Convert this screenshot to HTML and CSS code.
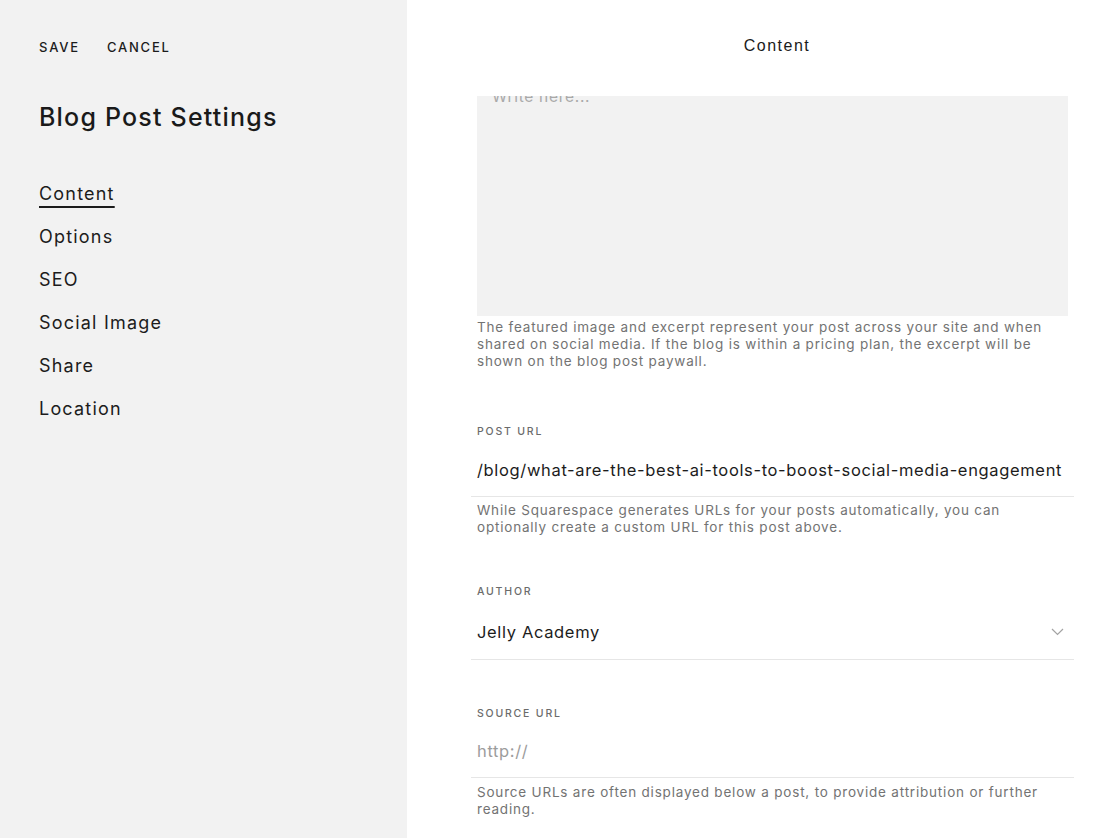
FILE: index.html
```html
<!DOCTYPE html>
<html lang="en">
<head>
<meta charset="utf-8">
<title>Blog Post Settings</title>
<link rel="stylesheet" href="styles.css">
</head>
<body>
<div class="app">
  <aside class="sidebar">
    <div class="actions">
      <span class="action">SAVE</span>
      <span class="action">CANCEL</span>
    </div>
    <h1 class="title">Blog Post Settings</h1>
    <nav class="nav">
      <a class="nav-item active">Content</a>
      <a class="nav-item">Options</a>
      <a class="nav-item">SEO</a>
      <a class="nav-item">Social Image</a>
      <a class="nav-item">Share</a>
      <a class="nav-item">Location</a>
    </nav>
  </aside>
  <main class="main">
    <header class="topbar">Content</header>
    <div class="content">
      <div class="excerpt"><div class="excerpt-placeholder">Write here...</div></div>
      <p class="help help-first">The featured image and excerpt represent your post across your site and when shared on social media. If the blog is within a pricing plan, the excerpt will be shown on the blog post paywall.</p>

      <section class="field field-post">
        <div class="label">POST URL</div>
        <div class="input value">/blog/what-are-the-best-ai-tools-to-boost-social-media-engagement</div>
        <p class="help">While Squarespace generates URLs for your posts automatically, you can optionally create a custom URL for this post above.</p>
      </section>

      <section class="field field-author">
        <div class="label">AUTHOR</div>
        <div class="input select">
          <span class="value">Jelly Academy</span>
          <svg class="chevron" width="13" height="8" viewBox="0 0 13 8"><path d="M1 1 L6.5 6.5 L12 1" fill="none" stroke="#a3a3a3" stroke-width="1.2"/></svg>
        </div>
      </section>

      <section class="field field-source">
        <div class="label">SOURCE URL</div>
        <div class="input input-source placeholder">http://</div>
        <p class="help help-source">Source URLs are often displayed below a post, to provide attribution or further reading.</p>
      </section>
    </div>
  </main>
</div>
</body>
</html>
```
FILE: styles.css
```css
* { box-sizing: border-box; }
html, body { margin: 0; padding: 0; }
body {
  font-family: Inter, "Liberation Sans", Arial, sans-serif;
  color: #1c1c1c;
  background: #ffffff;
  width: 1108px;
  height: 838px;
  overflow: hidden;
}
.app {
  display: flex;
  height: 838px;
}
.sidebar {
  width: 407px;
  flex: 0 0 407px;
  background: #f2f2f2;
  padding: 39px 0 0 39px;
}
.actions {
  display: flex;
  gap: 27px;
  line-height: 16px;
}
.action {
  font-size: 13px;
  font-weight: 500;
  letter-spacing: 1.8px;
  color: #1c1c1c;
}
.title {
  margin: 47px 0 0;
  font-size: 25px;
  line-height: 30px;
  font-weight: 500;
  letter-spacing: 1.2px;
  color: #1a1a1a;
}
.nav {
  margin-top: 50px;
  display: flex;
  flex-direction: column;
  align-items: flex-start;
  gap: 19px;
}
.nav-item {
  font-size: 18px;
  line-height: 24px;
  letter-spacing: 1.2px;
  color: #1c1c1c;
}
.nav-item.active {
  text-decoration: underline;
  text-decoration-thickness: 2px;
  text-underline-offset: 6px;
}
.main {
  flex: 1;
  display: flex;
  flex-direction: column;
}
.topbar {
  height: 96px;
  padding: 37px 0 0 39px;
  text-align: center;
  font-family: "Liberation Sans", Arial, sans-serif;
  font-size: 16px;
  line-height: 18px;
  letter-spacing: 1.5px;
  color: #1a1a1a;
}
.content {
  padding: 0 34px 0 64px;
}
.excerpt {
  margin: 0 6px;
  height: 220px;
  background: #f2f2f2;
  overflow: hidden;
}
.excerpt-placeholder {
  margin-top: -9px;
  padding-left: 15px;
  font-size: 15.5px;
  line-height: 20px;
  letter-spacing: 0.7px;
  color: #a9a9a9;
}
.help {
  margin: 5px 0 0;
  padding: 0 6px;
  font-size: 13.5px;
  line-height: 17px;
  letter-spacing: 0.8px;
  color: #737373;
}
.help-first { margin-top: 3px; }
.field-post { margin-top: 55px; }
.field-author { margin-top: 49px; }
.field-source { margin-top: 47px; }
.label {
  padding: 0 6px;
  font-size: 10.5px;
  line-height: 14px;
  font-weight: 500;
  letter-spacing: 1.8px;
  color: #6b6b6b;
}
.input {
  padding: 21px 6px 16px;
  font-size: 16.5px;
  line-height: 20px;
  letter-spacing: 0.65px;
  border-bottom: 1px solid #e6e6e6;
  color: #1c1c1c;
}
.select {
  display: flex;
  align-items: center;
  justify-content: space-between;
  padding: 23px 10px 17px 6px;
}
.chevron { display: block; }
.input-source { padding: 20px 6px 16px; }
.placeholder { color: #9c9c9c; }
.help-source { margin-top: 6px; }
```
